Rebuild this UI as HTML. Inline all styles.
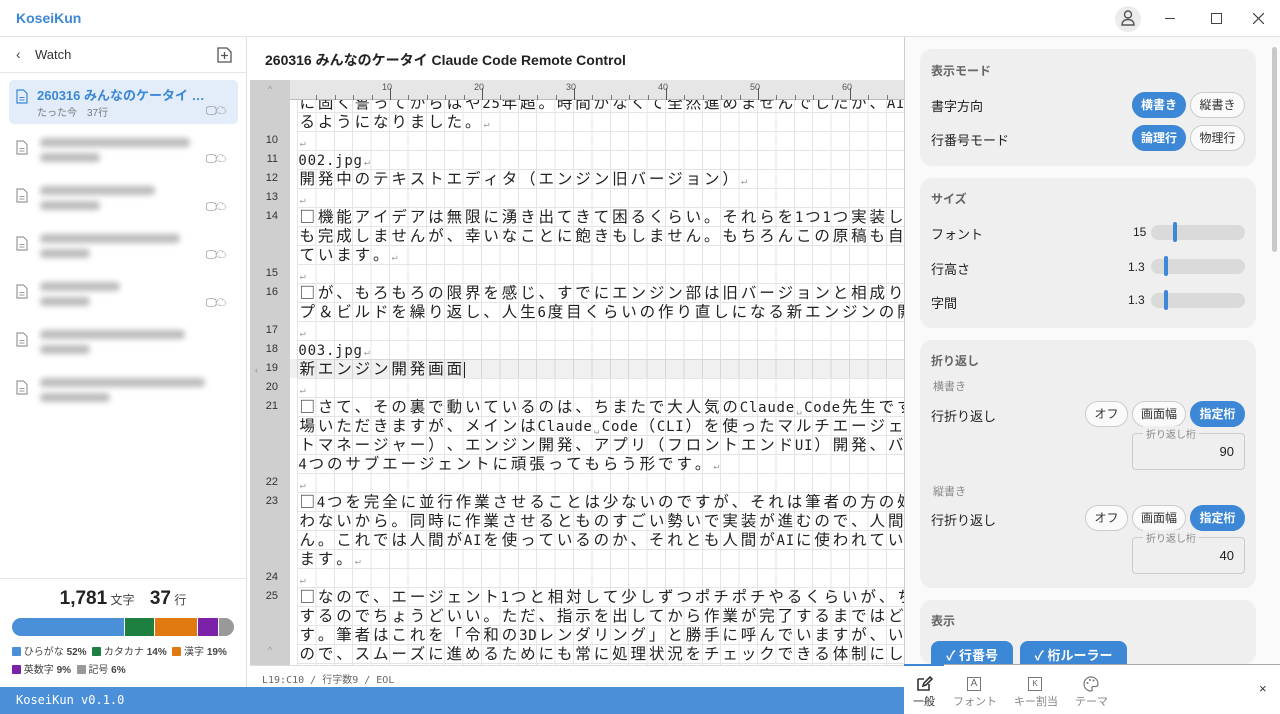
<!DOCTYPE html>
<html><head><meta charset="utf-8">
<style>
*{box-sizing:border-box;margin:0;padding:0}
body{width:1280px;height:714px;overflow:hidden;background:#fff;font-family:"Liberation Sans","Noto Sans CJK JP",sans-serif;color:#222;position:relative}
.abs{position:absolute}
#title{left:0;top:0;width:1280px;height:37px;border-bottom:1px solid #e2e2e2;background:#fff}
#side{left:0;top:37px;width:247px;height:650px;border-right:1px solid #e0e0e0;background:#fff}
.blur{filter:blur(3px);background:#bbb;height:9px;border-radius:4px;position:absolute}
.doc{position:absolute}
.ic{position:absolute;font-size:11px;color:#777;letter-spacing:-1px}
#editor{left:250px;top:80px;width:654px;height:585px;overflow:hidden;background:#fff}
#gut{position:absolute;left:0;top:0;width:40px;height:585px;background:#cfcfcf}
#grid{position:absolute;left:47px;top:0;width:620px;height:585px;
background-image:repeating-linear-gradient(90deg,#e4e4e4 0 1px,transparent 1px 18.4px),repeating-linear-gradient(180deg,#e4e4e4 0 1px,transparent 1px 19px);background-position:0 0,0 13px}
#text{position:absolute;left:48px;top:13px;font-family:"Noto Sans CJK JP",sans-serif;font-size:15.5px;color:#222}
.r{height:19px;line-height:19px;white-space:nowrap}
.c{display:inline-block;width:18.4px;text-align:center}
.h{display:inline-block;width:9.2px;text-align:center;font-family:"DejaVu Sans Mono",monospace;font-size:14px}
.ret{color:#999;font-size:10px}
.ln{position:absolute;left:0;width:40px;text-align:right;padding-right:12px;font-size:11px;color:#333;height:19px;line-height:19px}
#ruler{position:absolute;left:0;top:0;width:654px;height:20px;background:#e6e6e6;border-bottom:1px solid #bbb}
.card{position:absolute;left:920px;width:336px;background:#efefef;border-radius:12px}
.lbl{position:absolute;font-size:13px;color:#222}
.sub{position:absolute;font-size:12px;color:#666;font-weight:bold}
.btn{position:absolute;height:26px;border-radius:13px;font-size:12px;line-height:24px;text-align:center;border:1px solid #ccc;background:#fafafa;color:#333}
.on{background:#3c87d6;border-color:#3c87d6;color:#fff;font-weight:bold}
.sl{position:absolute;width:94px;height:15px;background:#dadada;border-radius:8px}
.th{position:absolute;width:4px;height:20px;background:#3c87d6;border-radius:2px;top:-3px}
.inp{position:absolute;width:113px;height:37px;border:1px solid #ccc;border-radius:4px;font-size:13px;text-align:right;padding:10px 10px 0 0}
.inp span{position:absolute;left:10px;top:-8px;background:#efefef;font-size:10px;color:#888;padding:0 3px}
.sq{display:inline-block;width:9px;height:9px;border-radius:1px;vertical-align:-1px}
</style></head><body>
<svg width="0" height="0" style="position:absolute"><defs><symbol id="doc" viewBox="0 0 12 15"><path d="M1 1h6.5L11 4.5V14H1z" fill="none" stroke="currentColor" stroke-width="1.2"/><path d="M3.5 8.5h5M3.5 11h5" stroke="currentColor" stroke-width="1.1"/></symbol></defs></svg>
<div id="title" class="abs">
 <div class="abs" style="left:16px;top:10px;font-size:14px;font-weight:bold;color:#3c87d6">KoseiKun</div>
 <div class="abs" style="left:1115px;top:6px;width:26px;height:26px;border-radius:13px;background:#ececec"></div>
 <svg class="abs" style="left:1120px;top:9px" width="16" height="18" viewBox="0 0 16 18"><circle cx="8" cy="5.5" r="3.5" fill="none" stroke="#555" stroke-width="1.4"/><path d="M2 16c0-3.5 2.5-5.5 6-5.5s6 2 6 5.5z" fill="none" stroke="#555" stroke-width="1.4"/></svg>
 <div class="abs" style="left:1165px;top:18px;width:10px;height:1px;background:#444"></div>
 <div class="abs" style="left:1211px;top:13px;width:11px;height:11px;border:1px solid #444"></div>
 <svg class="abs" style="left:1253px;top:13px" width="11" height="11"><path d="M0 0L11 11M11 0L0 11" stroke="#444" stroke-width="1.2"/></svg>
</div>
<div id="side" class="abs">
 <div class="abs" style="left:0;top:0;width:246px;height:36px;border-bottom:1px solid #e6e6e6"></div>
 <div class="abs" style="left:16px;top:9px;font-size:14px;color:#444">‹</div>
 <div class="abs" style="left:35px;top:10px;font-size:13px;color:#333">Watch</div>
 <svg class="abs" style="left:217px;top:10px" width="15" height="16"><path d="M1 1h9l4 4v10H1z" fill="none" stroke="#555" stroke-width="1.3"/><path d="M7.5 5v7M4 8.5h7" stroke="#555" stroke-width="1.3"/></svg>
 <div class="abs" style="left:9px;top:43px;width:229px;height:44px;background:#e3edf9;border-radius:5px"></div>
 <svg class="doc" style="left:16px;top:52px;color:#3c87d6" width="12" height="15"><use href="#doc"/></svg>
 <div class="abs" style="left:37px;top:48px;font-size:13px;font-weight:bold;color:#3c87d6">260316 みんなのケータイ …</div>
 <div class="abs" style="left:37px;top:67px;font-size:10px;color:#777">たった今　37行</div>
 <div class="ic" style="left:206px;top:65px">🖵☁</div>
 <svg class="doc" style="left:16px;top:103px;color:#999" width="12" height="15"><use href="#doc"/></svg><div class="blur" style="left:40px;top:101px;width:150px"></div><div class="blur" style="left:40px;top:116px;width:60px"></div><div class="ic" style="left:206px;top:113px">🖵☁</div>
 <svg class="doc" style="left:16px;top:151px;color:#999" width="12" height="15"><use href="#doc"/></svg><div class="blur" style="left:40px;top:149px;width:115px"></div><div class="blur" style="left:40px;top:164px;width:60px"></div><div class="ic" style="left:206px;top:161px">🖵☁</div>
 <svg class="doc" style="left:16px;top:199px;color:#999" width="12" height="15"><use href="#doc"/></svg><div class="blur" style="left:40px;top:197px;width:140px"></div><div class="blur" style="left:40px;top:212px;width:50px"></div><div class="ic" style="left:206px;top:209px">🖵☁</div>
 <svg class="doc" style="left:16px;top:247px;color:#999" width="12" height="15"><use href="#doc"/></svg><div class="blur" style="left:40px;top:245px;width:80px"></div><div class="blur" style="left:40px;top:260px;width:50px"></div><div class="ic" style="left:206px;top:257px">🖵☁</div>
 <svg class="doc" style="left:16px;top:295px;color:#999" width="12" height="15"><use href="#doc"/></svg><div class="blur" style="left:40px;top:293px;width:145px"></div><div class="blur" style="left:40px;top:308px;width:50px"></div>
 <svg class="doc" style="left:16px;top:343px;color:#999" width="12" height="15"><use href="#doc"/></svg><div class="blur" style="left:40px;top:341px;width:165px"></div><div class="blur" style="left:40px;top:356px;width:70px"></div>
 <div class="abs" style="left:0;top:541px;width:246px;height:1px;background:#e6e6e6"></div>
 <div class="abs" style="left:0;top:551px;width:246px;text-align:center;font-size:12px;color:#444"><b style="font-size:19px;color:#222">1,781</b> 文字　 <b style="font-size:19px;color:#222">37</b> 行</div>
 <div class="abs" style="left:12px;top:581px;width:222px;height:18px;border-radius:9px;overflow:hidden;display:flex">
  <div style="width:113px;background:#4a90d9;border-right:1px solid #fff"></div><div style="width:30px;background:#1e8040;border-right:1px solid #fff"></div><div style="width:43px;background:#e07a10;border-right:1px solid #fff"></div><div style="width:21px;background:#7b22a8;border-right:1px solid #fff"></div><div style="flex:1;background:#999"></div></div>
 <div class="abs" style="left:12px;top:607px;font-size:10px;color:#444;line-height:18px">
  <span class="sq" style="background:#4a90d9"></span> ひらがな <b>52%</b>&nbsp;&nbsp;<span class="sq" style="background:#1e8040"></span> カタカナ <b>14%</b>&nbsp;&nbsp;<span class="sq" style="background:#e07a10"></span> 漢字 <b>19%</b><br>
  <span class="sq" style="background:#7b22a8"></span> 英数字 <b>9%</b>&nbsp;&nbsp;<span class="sq" style="background:#999"></span> 記号 <b>6%</b></div>
</div>
<div class="abs" style="left:265px;top:50px;font-size:14px;font-weight:bold;color:#222">260316 みんなのケータイ Claude Code Remote Control</div>
<div id="editor" class="abs">
 <div id="grid"></div>
 <div class="abs" style="left:40px;top:279px;width:620px;height:19px;background:rgba(0,0,0,0.06)"></div>
 <div id="gut"></div>
 <div id="lns"></div>
 <div id="text"></div>
 <div id="ruler"><div class="abs" style="left:0;top:0;width:40px;height:20px;background:#cfcfcf;color:#999;font-size:9px;text-align:center;line-height:18px">^</div><div id="rt"></div></div>
 <div class="abs" style="left:0;top:565px;width:40px;height:20px;background:#cfcfcf;color:#999;font-size:9px;text-align:center">^</div>
 <div class="abs" style="left:0;top:285px;width:13px;font-size:9px;color:#888;text-align:center">‹</div>
</div>
<div class="abs" style="left:250px;top:665px;width:654px;height:22px;border-top:1px solid #ddd;font-size:10px;color:#666;padding:5px 12px;font-family:'DejaVu Sans Mono','Noto Sans CJK JP',monospace">L19:C10 / 行字数9 / EOL</div>
<div class="abs" style="left:0;top:687px;width:904px;height:27px;background:#4a8fd8;color:#fff;font-size:12px;padding:6px 16px;font-family:'DejaVu Sans Mono',monospace">KoseiKun v0.1.0</div>

<div class="abs" style="left:904px;top:37px;width:376px;height:627px;background:#fafafa;border-left:1px solid #ccc"></div>
<div class="abs" style="left:1272px;top:47px;width:5px;height:205px;background:#c8c8c8;border-radius:3px"></div>
<div class="card" style="top:49px;height:117px">
 <div class="sub" style="left:11px;top:13px">表示モード</div>
 <div class="lbl" style="left:11px;top:47px">書字方向</div>
 <div class="btn on" style="left:212px;top:43px;width:54px">横書き</div><div class="btn" style="left:270px;top:43px;width:55px">縦書き</div>
 <div class="lbl" style="left:11px;top:81px">行番号モード</div>
 <div class="btn on" style="left:212px;top:76px;width:54px">論理行</div><div class="btn" style="left:270px;top:76px;width:55px">物理行</div>
</div>
<div class="card" style="top:178px;height:150px">
 <div class="sub" style="left:11px;top:12px">サイズ</div>
 <div class="lbl" style="left:11px;top:46px">フォント</div><div class="lbl" style="left:213px;top:47px;font-size:12px">15</div><div class="sl" style="left:231px;top:47px"><div class="th" style="left:22px"></div></div>
 <div class="lbl" style="left:11px;top:81px">行高さ</div><div class="lbl" style="left:208px;top:82px;font-size:12px">1.3</div><div class="sl" style="left:231px;top:81px"><div class="th" style="left:13px"></div></div>
 <div class="lbl" style="left:11px;top:115px">字間</div><div class="lbl" style="left:208px;top:115px;font-size:12px">1.3</div><div class="sl" style="left:231px;top:115px"><div class="th" style="left:13px"></div></div>
</div>
<div class="card" style="top:340px;height:248px">
 <div class="sub" style="left:11px;top:12px">折り返し</div>
 <div class="abs" style="left:13px;top:38px;font-size:11px;color:#888">横書き</div>
 <div class="lbl" style="left:11px;top:66px">行折り返し</div>
 <div class="btn" style="left:165px;top:61px;width:43px">オフ</div><div class="btn" style="left:212px;top:61px;width:54px">画面幅</div><div class="btn on" style="left:270px;top:61px;width:55px">指定桁</div>
 <div class="inp" style="left:212px;top:93px">90<span>折り返し桁</span></div>
 <div class="abs" style="left:13px;top:143px;font-size:11px;color:#888">縦書き</div>
 <div class="lbl" style="left:11px;top:170px">行折り返し</div>
 <div class="btn" style="left:165px;top:165px;width:43px">オフ</div><div class="btn" style="left:212px;top:165px;width:54px">画面幅</div><div class="btn on" style="left:270px;top:165px;width:55px">指定桁</div>
 <div class="inp" style="left:212px;top:197px">40<span>折り返し桁</span></div>
</div>
<div class="card" style="top:600px;height:64px">
 <div class="sub" style="left:11px;top:12px">表示</div>
 <div class="btn on" style="left:11px;top:41px;width:82px;height:30px;border-radius:8px;font-size:13px;line-height:28px">✓ 行番号</div>
 <div class="btn on" style="left:100px;top:41px;width:107px;height:30px;border-radius:8px;font-size:13px;line-height:28px">✓ 桁ルーラー</div>
</div>
<div class="abs" style="left:904px;top:664px;width:376px;height:50px;background:#fff;border-top:1px solid #aaa"></div>
<div class="abs" style="left:904px;top:664px;width:40px;height:2px;background:#3c87d6"></div>
<svg class="abs" style="left:915px;top:675px" width="18" height="18"><path d="M3 4h6M3 4v11h11v-6" fill="none" stroke="#333" stroke-width="1.6"/><path d="M8 11l1-3 6-6 2 2-6 6z" fill="none" stroke="#333" stroke-width="1.6"/></svg>
<div class="abs" style="left:913px;top:693px;font-size:11px;color:#333">一般</div>
<div class="abs" style="left:967px;top:677px;width:14px;height:14px;border:1.2px solid #777;font-size:10px;text-align:center;line-height:12px;color:#666">A</div>
<div class="abs" style="left:953px;top:693px;font-size:11px;color:#888">フォント</div>
<div class="abs" style="left:1028px;top:677px;width:14px;height:14px;border:1.5px solid #777;font-size:8px;text-align:center;line-height:11px;color:#666">K</div>
<div class="abs" style="left:1014px;top:693px;font-size:11px;color:#888">キー割当</div>
<svg class="abs" style="left:1083px;top:676px" width="16" height="16"><path d="M8 1a7 7 0 1 0 0 14c1.5 0 1.5-1.5 1-2.5s0-2 1.5-2H13a2.5 2.5 0 0 0 2-2.5C15 4 12 1 8 1z" fill="none" stroke="#777" stroke-width="1.2"/><circle cx="4.5" cy="7" r="1" fill="#777"/><circle cx="7" cy="4" r="1" fill="#777"/><circle cx="10.5" cy="4.5" r="1" fill="#777"/></svg>
<div class="abs" style="left:1075px;top:693px;font-size:11px;color:#888">テーマ</div>
<div class="abs" style="left:1259px;top:681px;font-size:13px;color:#333">×</div>

<script>
var rows=[
[null,"に固く誓ってからはや25年超。時間がなくて全然進めませんでしたが、AI"],
[null,"るようになりました。↵"],
[10,"↵"],[11,"002.jpg↵"],[12,"開発中のテキストエディタ（エンジン旧バージョン）↵"],[13,"↵"],
[14,"□機能アイデアは無限に湧き出てきて困るくらい。それらを1つ1つ実装し"],
[null,"も完成しませんが、幸いなことに飽きもしません。もちろんこの原稿も自"],
[null,"ています。↵"],[15,"↵"],
[16,"□が、もろもろの限界を感じ、すでにエンジン部は旧バージョンと相成り"],
[null,"プ＆ビルドを繰り返し、人生6度目くらいの作り直しになる新エンジンの開"],
[17,"↵"],[18,"003.jpg↵"],[19,"新エンジン開発画面|"],[20,"↵"],
[21,"□さて、その裏で動いているのは、ちまたで大人気のClaude␣Code先生です"],
[null,"場いただきますが、メインはClaude␣Code（CLI）を使ったマルチエージェ"],
[null,"トマネージャー）、エンジン開発、アプリ（フロントエンドUI）開発、バ"],
[null,"4つのサブエージェントに頑張ってもらう形です。↵"],[22,"↵"],
[23,"□4つを完全に並行作業させることは少ないのですが、それは筆者の方の処"],
[null,"わないから。同時に作業させるとものすごい勢いで実装が進むので、人間"],
[null,"ん。これでは人間がAIを使っているのか、それとも人間がAIに使われてい"],
[null,"ます。↵"],[24,"↵"],
[25,"□なので、エージェント1つと相対して少しずつポチポチやるくらいが、ち"],
[null,"するのでちょうどいい。ただ、指示を出してから作業が完了するまではど"],
[null,"す。筆者はこれを「令和の3Dレンダリング」と勝手に呼んでいますが、い"],
[null,"ので、スムーズに進めるためにも常に処理状況をチェックできる体制にし"]];
var t=document.getElementById('text'),L=document.getElementById('lns'),h='',lh='';
rows.forEach(function(r,i){var s='';for(var ch of r[1]){
 if(ch=='↵')s+='<span class="h ret">↵</span>';
 else if(ch=='|')s+='<span style="display:inline-block;width:1px;height:16px;background:#222;vertical-align:middle"></span>';
 else if(ch=='␣')s+='<span class="h ret">␣</span>';
 else if(ch.charCodeAt(0)<128)s+='<span class="h">'+ch+'</span>';
 else s+='<span class="c">'+ch+'</span>';}
 h+='<div class="r">'+s+'</div>';
 if(r[0])lh+='<div class="ln" style="top:'+(13+i*19)+'px">'+r[0]+'</div>';});
t.innerHTML=h;L.innerHTML=lh;
var rt='';for(var n=1;n<=70;n++){var x=48+n*9.2;if(n%10==0)rt+='<div class="abs" style="left:'+(x-8)+'px;top:2px;font-size:9px;color:#555">'+n+'</div><div class="abs" style="left:'+x+'px;top:8px;width:1px;height:12px;background:#555"></div>';else if(n%2==0)rt+='<div class="abs" style="left:'+x+'px;top:15px;width:1px;height:5px;background:#777"></div>';}
document.getElementById('rt').innerHTML=rt;
</script>
</body></html>
